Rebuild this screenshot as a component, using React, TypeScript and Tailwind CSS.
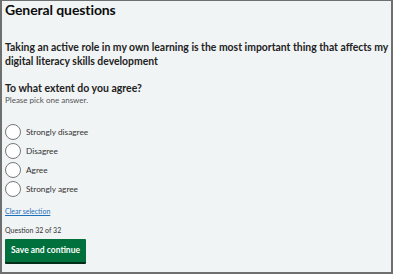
const options = ['Strongly disagree', 'Disagree', 'Agree', 'Strongly agree']

const App = () => {
  return (
    <div className="w-[393px] h-[275px] bg-white" style={{ fontFamily: 'Lato, "Noto Sans", sans-serif' }}>
      <div className="w-[393px] h-[274px] border-t border-l-2 border-r-2 border-b-2 border-[#6f6f6f] bg-[#f1f4f5] pl-[3px] pr-[2px] text-[#0b0c0c] overflow-hidden">
        <h1 className="text-[14px] font-bold leading-[16px] pt-[1px] tracking-[-0.1px]">General questions</h1>

        <p className="text-[10.4px] font-bold leading-[14px] mt-[22px] text-[#222]">
          Taking an active role in my own learning is the most important thing that affects my digital literacy skills development
        </p>

        <h2 className="text-[10.5px] font-bold leading-[14px] mt-[13px] text-[#222]">To what extent do you agree?</h2>
        <p className="text-[8px] leading-[10px] text-[#555]">Please pick one answer.</p>

        <div className="mt-[19px] flex flex-col gap-[3px]">
          {options.map((o) => (
            <label key={o} className="flex items-center gap-[5px] h-[16px]">
              <span className="w-[16px] h-[16px] rounded-full border border-[#777] bg-white shrink-0" />
              <span className="text-[8.3px] text-[#333]">{o}</span>
            </label>
          ))}
        </div>

        <a href="#" className="block mt-[9px] text-[7px] text-[#1d70b8] underline leading-[10px]">Clear selection</a>

        <p className="mt-[9px] text-[7px] leading-[10px] text-[#333]">Question 32 of 32</p>

        <button className="mt-[2px] w-[81px] h-[23px] bg-[#00703c] text-white text-[8.5px] font-bold rounded-[1px] shadow-[0_2px_0_#002d18]">
          Save and continue
        </button>
      </div>
    </div>
  )
}

export default App
